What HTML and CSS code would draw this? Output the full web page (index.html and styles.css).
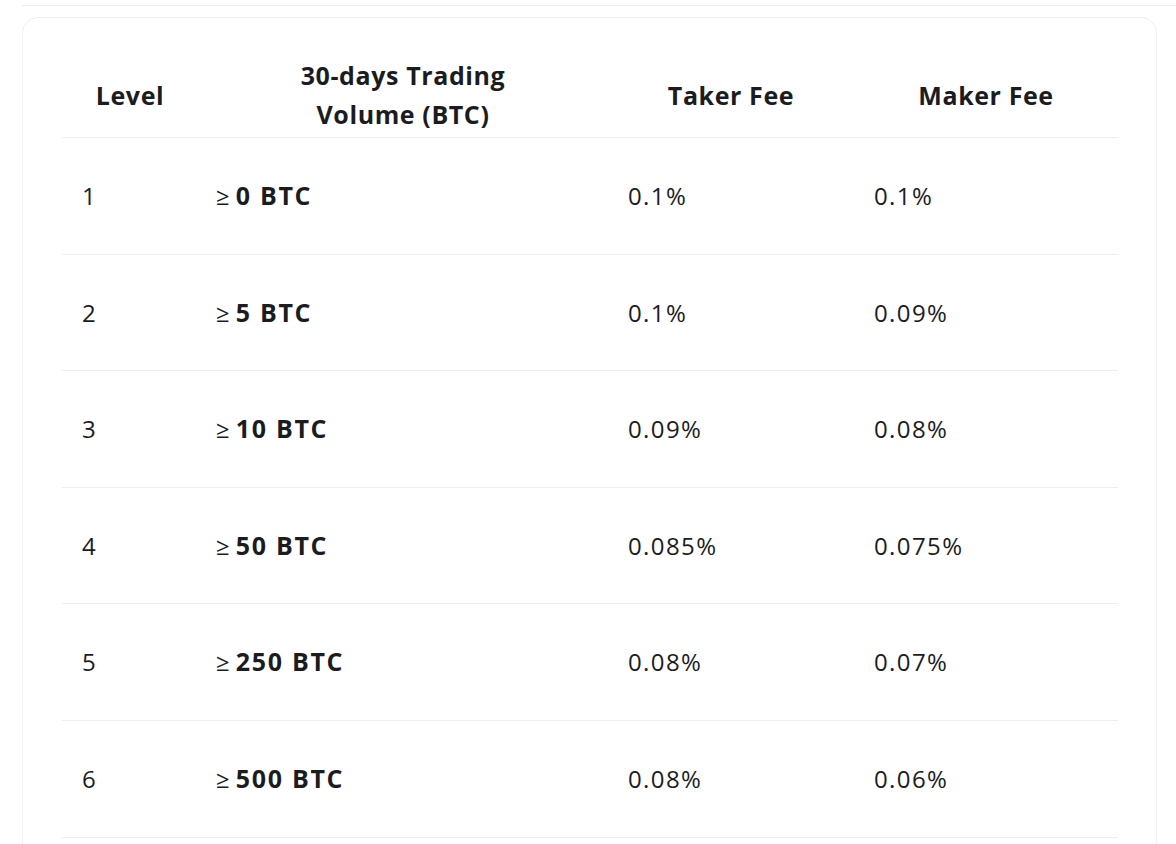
FILE: index.html
```html
<!DOCTYPE html>
<html lang="en">
<head>
<meta charset="utf-8">
<title>Trading Fees</title>
<link rel="stylesheet" href="styles.css">
</head>
<body>
<div class="page">
  <div class="divider"></div>
  <div class="card">
    <table class="fees">
      <colgroup>
        <col class="c-level">
        <col class="c-volume">
        <col class="c-taker">
        <col class="c-maker">
      </colgroup>
      <thead>
        <tr>
          <th>Level</th>
          <th>30-days Trading<br>Volume (BTC)</th>
          <th>Taker Fee</th>
          <th>Maker Fee</th>
        </tr>
      </thead>
      <tbody>
        <tr><td>1</td><td class="vol"><span class="ge">≥</span>0 BTC</td><td>0.1%</td><td>0.1%</td></tr>
        <tr><td>2</td><td class="vol"><span class="ge">≥</span>5 BTC</td><td>0.1%</td><td>0.09%</td></tr>
        <tr><td>3</td><td class="vol"><span class="ge">≥</span>10 BTC</td><td>0.09%</td><td>0.08%</td></tr>
        <tr><td>4</td><td class="vol"><span class="ge">≥</span>50 BTC</td><td>0.085%</td><td>0.075%</td></tr>
        <tr><td>5</td><td class="vol"><span class="ge">≥</span>250 BTC</td><td>0.08%</td><td>0.07%</td></tr>
        <tr><td>6</td><td class="vol"><span class="ge">≥</span>500 BTC</td><td>0.08%</td><td>0.06%</td></tr>
      </tbody>
    </table>
  </div>
</div>
</body>
</html>
```
FILE: styles.css
```css
html, body {
  margin: 0;
  padding: 0;
  background: #ffffff;
}
body {
  font-family: "Open Sans", "Noto Sans", sans-serif;
  color: #1b1c1e;
  overflow: hidden;
}
.page {
  padding-top: 5px;
  padding-left: 22px;
}
.divider {
  border-top: 1px solid #ececec;
}
.card {
  margin-top: 11px;
  width: 1135px;
  box-sizing: border-box;
  border: 1px solid #efefef;
  border-radius: 16px;
  padding: 36px 39px 0 39px;
  height: 900px;
}
.fees {
  width: 1056px;
  border-collapse: collapse;
  table-layout: fixed;
}
.c-level { width: 136px; }
.c-volume { width: 410px; }
.c-taker { width: 246px; }
.c-maker { width: 264px; }
.fees th {
  font-size: 25px;
  font-weight: 700;
  letter-spacing: 0.6px;
  line-height: 39px;
  padding: 2px 0 3px 0;
  text-align: center;
  border-bottom: 1px solid #efefef;
}
.fees td {
  font-size: 24px;
  font-weight: 400;
  letter-spacing: 1.4px;
  line-height: 37.6px;
  padding: 39px 0 39px 20px;
  text-align: left;
  border-bottom: 1px solid #efefef;
  white-space: nowrap;
}
.fees td.vol {
  padding-left: 18px;
  font-size: 25px;
  font-weight: 700;
  letter-spacing: 1.7px;
}
.ge {
  font-size: 24px;
  font-weight: 400;
  letter-spacing: 0;
  margin-right: 6px;
}
```
